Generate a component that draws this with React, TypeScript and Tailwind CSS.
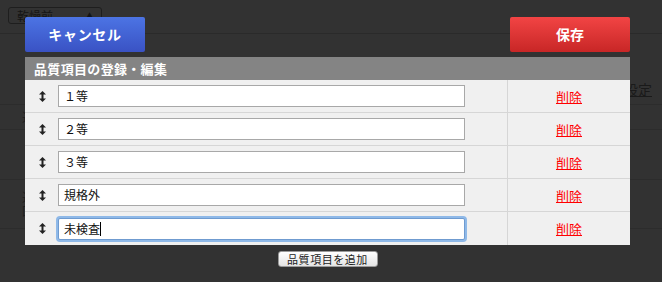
import React from 'react';

const items = ['１等', '２等', '３等', '規格外', '未検査'];

function SortIcon() {
  return (
    <svg width="7" height="11" viewBox="0 0 7 11" className="block">
      <path d="M3.5 0 L7 3.5 L0 3.5 Z" fill="#222" />
      <rect x="2.5" y="3" width="2" height="5" fill="#222" />
      <path d="M3.5 11 L7 7.5 L0 7.5 Z" fill="#222" />
    </svg>
  );
}

export default function App() {
  return (
    <div
      className="relative w-[662px] h-[282px] overflow-hidden bg-[#323232]"
      style={{ fontFamily: '"Noto Sans CJK JP", "Noto Sans", sans-serif' }}
    >
      {/* page underneath (dimmed) */}
      <div className="flex flex-col">
        <div className="h-[34px] border-b border-[#2a2a2a] px-2 pt-[7px]">
          <div className="w-[94px] h-[17px] rounded-[3px] border border-[#1e1e1e] flex items-center justify-between px-2 text-[12px] text-[#151515]">
            <span className="leading-none">乾燥前</span>
            <span className="text-[7px] leading-none">▲</span>
          </div>
        </div>
        <div className="flex justify-end pr-[10px] pt-[48px]">
          <span className="text-[14px] text-[#1a1a1a] underline leading-none">設定</span>
        </div>
        <div className="mt-[8px] h-[26px] border-t border-b border-[#2c2c2c] flex items-center px-[22px]">
          <span className="text-[12px] text-[#1e1e1e]">近</span>
        </div>
        <div className="h-[50px] border-b border-[#2c2c2c]" />
        <div className="h-[49px] border-b border-[#2c2c2c] flex flex-col justify-center gap-[2px] px-[22px]">
          <span className="text-[12px] text-[#1e1e1e] leading-none">近</span>
          <span className="text-[12px] text-[#1e1e1e] leading-none">回</span>
        </div>
      </div>

      {/* modal */}
      <div className="absolute left-[25px] top-[17px] w-[605px] flex flex-col">
        <div className="flex justify-between h-[35px]">
          <button className="w-[120px] h-[35px] rounded-[2px] bg-gradient-to-b from-[#4c74e4] to-[#3a52c4] text-white text-[14px] font-bold tracking-wider">
            キャンセル
          </button>
          <button className="w-[120px] h-[35px] rounded-[2px] bg-gradient-to-b from-[#f24444] to-[#c82626] text-white text-[14px] font-bold">
            保存
          </button>
        </div>
        <div className="mt-[5px] h-[23px] bg-[#848484] flex items-center px-[9px] text-white text-[13px] font-bold tracking-wide">
          品質項目の登録・編集
        </div>
        <div className="bg-[#f0f0f0] flex flex-col">
          {items.map((it, i) => (
            <div
              key={i}
              className={`flex h-[33px] ${i < items.length - 1 ? 'border-b border-[#d6d6d6]' : ''}`}
            >
              <div className="w-[33px] flex items-center justify-center pl-[1px]">
                <SortIcon />
              </div>
              <div className="w-[450px] flex items-center border-r border-[#d6d6d6]">
                <div
                  className={`w-[407px] h-[22px] bg-white flex items-center px-[5px] text-[12px] text-[#111] ${
                    i === items.length - 1
                      ? 'border border-[#6f9bd0] shadow-[0_0_0_2px_#8fb9e8] rounded-[2px]'
                      : 'border border-[#a8a8a8]'
                  }`}
                >
                  <span>{it}</span>
                  {i === items.length - 1 && <span className="w-px h-[14px] bg-black" />}
                </div>
              </div>
              <div className="flex-1 flex items-center justify-center">
                <a className="text-[13px] text-[#ff0000] underline leading-none">削除</a>
              </div>
            </div>
          ))}
        </div>
        <div className="flex justify-center mt-[6px]">
          <button className="w-[100px] h-[16px] rounded-[3px] bg-gradient-to-b from-white to-[#e4e4e4] border border-[#9a9a9a] text-[11px] text-[#222] leading-none tracking-wider">
            品質項目を追加
          </button>
        </div>
      </div>
    </div>
  );
}
